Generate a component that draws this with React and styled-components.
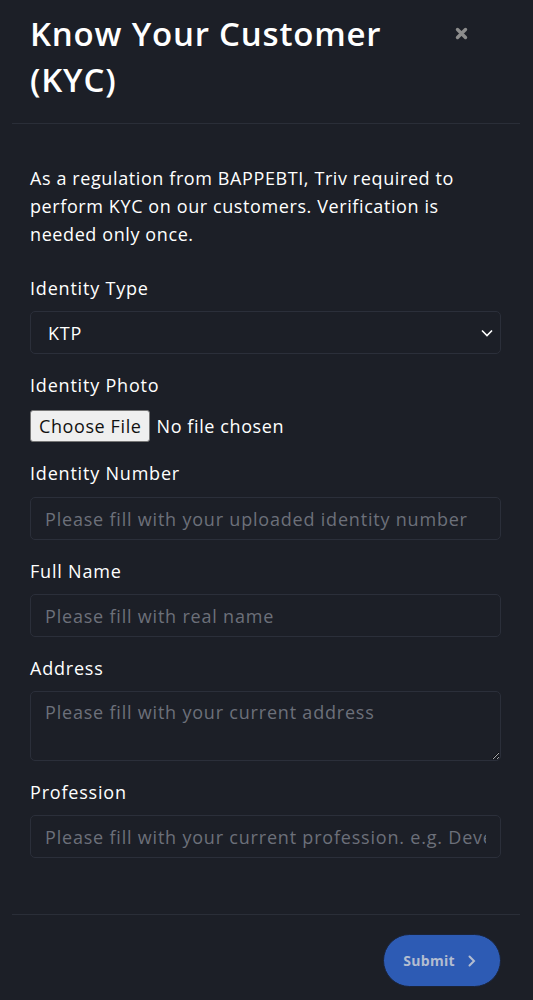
import styled, { createGlobalStyle } from 'styled-components';

const Global = createGlobalStyle`
  html, body {
    margin: 0;
    padding: 0;
    background: #1c1f27;
  }
  body {
    font-family: 'Open Sans', 'Liberation Sans', sans-serif;
    color: #ffffff;
  }
  * { box-sizing: border-box; }
`;

const Modal = styled.div`
  width: 508px;
  margin: 0 13px 0 12px;
  min-height: 1000px;
  display: flex;
  flex-direction: column;
`;

const Header = styled.div`
  display: flex;
  justify-content: space-between;
  align-items: flex-start;
  padding: 11px 18px 20px 18px;
  border-bottom: 1px solid #2a2e38;
`;

const Title = styled.h1`
  margin: 0;
  font-size: 33px;
  line-height: 46px;
  font-weight: 600;
  letter-spacing: 0.8px;
  width: 390px;
`;

const Close = styled.button`
  background: none;
  border: none;
  padding: 0;
  margin: 16px 34px 0 0;
  cursor: pointer;
  display: flex;
`;

const Body = styled.div`
  padding: 40px 19px 38px 18px;
  border-bottom: 1px solid #2a2e38;
`;

const Intro = styled.p`
  margin: 0 0 27px;
  font-size: 18px;
  line-height: 28px;
  letter-spacing: 0.6px;
`;

const Field = styled.div`
  display: flex;
  flex-direction: column;
  align-items: flex-start;
  margin-bottom: 18px;
`;

const Label = styled.label`
  font-size: 18px;
  line-height: 27px;
  letter-spacing: 0.8px;
  margin-bottom: ${(p) => (p.$tight ? 10 : 9)}px;
`;

const boxStyle = `
  width: 100%;
  background: #1c1f27;
  border: 1px solid #2b2f3a;
  border-radius: 5px;
  color: #ffffff;
  font-family: inherit;
  font-size: 18px;
  letter-spacing: 0.8px;
  outline: none;
  &::placeholder { color: #6c707a; }
`;

const Input = styled.input`
  ${boxStyle}
  height: 43px;
  padding: 0 14px;
`;

const TextArea = styled.textarea`
  ${boxStyle}
  height: 70px;
  padding: 8px 14px;
  line-height: 24px;
  resize: vertical;
  display: block;
`;

const SelectWrap = styled.div`
  position: relative;
  width: 100%;
`;

const Select = styled.select`
  ${boxStyle}
  height: 43px;
  padding: 0 17px;
  appearance: none;
`;

const Chevron = styled.svg`
  position: absolute;
  right: 7px;
  top: 15px;
  pointer-events: none;
`;

const FileRow = styled.div`
  display: flex;
  align-items: center;
  gap: 6px;
  height: 33px;
  letter-spacing: 0.6px;
`;

const FileButton = styled.span`
  display: inline-flex;
  align-items: center;
  height: 32px;
  padding: 0 8px;
  background: #efefef;
  border: 1px solid #767676;
  border-radius: 3px;
  color: #111;
  font-size: 18px;
`;

const FileText = styled.span`
  font-size: 18px;
`;

const Footer = styled.div`
  display: flex;
  justify-content: flex-end;
  padding: 19px 19px 0 0;
`;

const Submit = styled.button`
  display: flex;
  align-items: center;
  gap: 13px;
  height: 53px;
  padding: 0 24px 0 19px;
  border-radius: 27px;
  background: #2d5bb4;
  border: 1px solid #1a2338;
  color: #b3bdd0;
  font-family: inherit;
  font-weight: 700;
  font-size: 14px;
  letter-spacing: 0.3px;
  cursor: pointer;
`;

export default function App() {
  return (
    <>
      <Global />
      <Modal>
        <Header>
          <Title>Know Your Customer (KYC)</Title>
          <Close aria-label="Close">
            <svg width="13" height="13" viewBox="0 0 13 13">
              <path d="M2.5 2.5 L10.5 10.5 M10.5 2.5 L2.5 10.5" stroke="#8c8c8c" strokeWidth="3.4" strokeLinecap="round" />
            </svg>
          </Close>
        </Header>
        <Body>
          <Intro>
            As a regulation from BAPPEBTI, Triv required to perform KYC on our customers. Verification is
            needed only once.
          </Intro>
          <Field>
            <Label>Identity Type</Label>
            <SelectWrap>
              <Select defaultValue="KTP">
                <option>KTP</option>
                <option>Passport</option>
              </Select>
              <Chevron width="14" height="14" viewBox="0 0 14 14">
                <path d="M2 4.5 L7 9.5 L12 4.5" fill="none" stroke="#ffffff" strokeWidth="1.6" />
              </Chevron>
            </SelectWrap>
          </Field>
          <Field>
            <Label $tight>Identity Photo</Label>
            <FileRow>
              <FileButton>Choose File</FileButton>
              <FileText>No file chosen</FileText>
            </FileRow>
          </Field>
          <Field>
            <Label $tight>Identity Number</Label>
            <Input placeholder="Please fill with your uploaded identity number" />
          </Field>
          <Field>
            <Label>Full Name</Label>
            <Input placeholder="Please fill with real name" />
          </Field>
          <Field>
            <Label>Address</Label>
            <TextArea placeholder="Please fill with your current address" />
          </Field>
          <Field>
            <Label>Profession</Label>
            <Input placeholder="Please fill with your current profession. e.g. Developer" />
          </Field>
        </Body>
        <Footer>
          <Submit>
            Submit
            <svg width="8" height="12" viewBox="0 0 8 12">
              <path d="M1.5 1.5 L6 6 L1.5 10.5" fill="none" stroke="#b3bdd0" strokeWidth="2" strokeLinecap="round" />
            </svg>
          </Submit>
        </Footer>
      </Modal>
    </>
  );
}
